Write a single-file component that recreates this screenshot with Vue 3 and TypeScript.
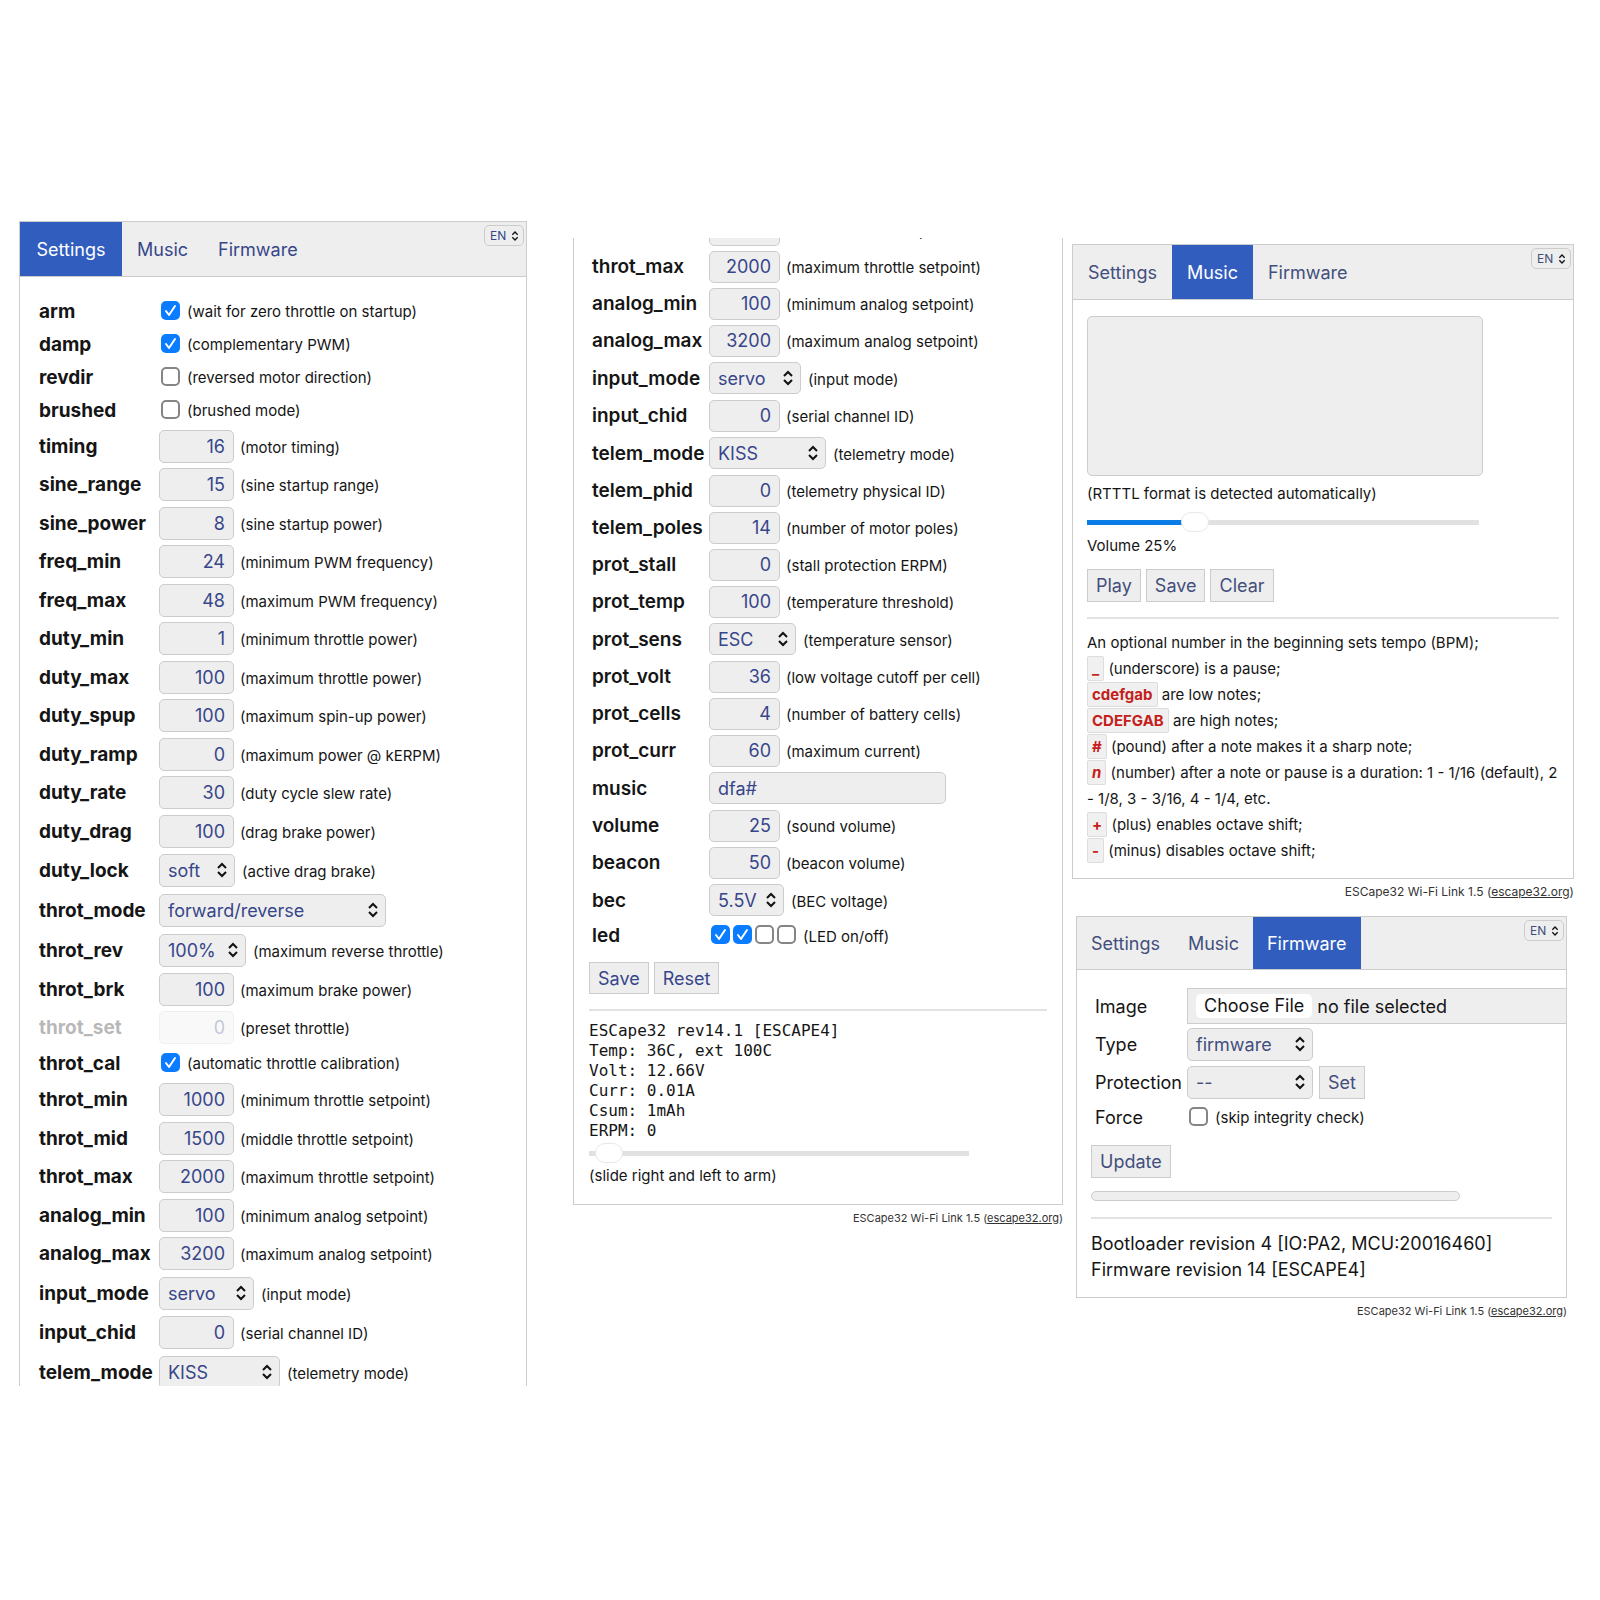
<script setup lang="ts">
import { reactive, ref } from 'vue'

type Kind = 'check' | 'number' | 'select' | 'text' | 'leds'

interface Setting {
  name: string
  kind: Kind
  value?: string | number
  on?: boolean
  leds?: boolean[]
  hint?: string
  size?: string
  disabled?: boolean
}

const check = (name: string, on: boolean, hint: string): Setting => ({ name, kind: 'check', on, hint })
const num = (name: string, value: number, hint: string, disabled = false): Setting => ({ name, kind: 'number', value, hint, disabled })
const pick = (name: string, value: string, size: string, hint = ''): Setting => ({ name, kind: 'select', value, size, hint })

const settings = reactive<Setting[]>([
  check('arm', true, 'wait for zero throttle on startup'),
  check('damp', true, 'complementary PWM'),
  check('revdir', false, 'reversed motor direction'),
  check('brushed', false, 'brushed mode'),
  num('timing', 16, 'motor timing'),
  num('sine_range', 15, 'sine startup range'),
  num('sine_power', 8, 'sine startup power'),
  num('freq_min', 24, 'minimum PWM frequency'),
  num('freq_max', 48, 'maximum PWM frequency'),
  num('duty_min', 1, 'minimum throttle power'),
  num('duty_max', 100, 'maximum throttle power'),
  num('duty_spup', 100, 'maximum spin-up power'),
  num('duty_ramp', 0, 'maximum power @ kERPM'),
  num('duty_rate', 30, 'duty cycle slew rate'),
  num('duty_drag', 100, 'drag brake power'),
  pick('duty_lock', 'soft', 'xs', 'active drag brake'),
  pick('throt_mode', 'forward/reverse', 'xl'),
  pick('throt_rev', '100%', 'sm', 'maximum reverse throttle'),
  num('throt_brk', 100, 'maximum brake power'),
  num('throt_set', 0, 'preset throttle', true),
  check('throt_cal', true, 'automatic throttle calibration'),
  num('throt_min', 1000, 'minimum throttle setpoint'),
  num('throt_mid', 1500, 'middle throttle setpoint'),
  num('throt_max', 2000, 'maximum throttle setpoint'),
  num('analog_min', 100, 'minimum analog setpoint'),
  num('analog_max', 3200, 'maximum analog setpoint'),
  pick('input_mode', 'servo', 'md', 'input mode'),
  num('input_chid', 0, 'serial channel ID'),
  pick('telem_mode', 'KISS', 'lg', 'telemetry mode'),
])

const moreSettings = reactive<Setting[]>([
  num('throt_mid', 1500, 'middle throttle setpoint'),
  num('throt_max', 2000, 'maximum throttle setpoint'),
  num('analog_min', 100, 'minimum analog setpoint'),
  num('analog_max', 3200, 'maximum analog setpoint'),
  pick('input_mode', 'servo', 'md', 'input mode'),
  num('input_chid', 0, 'serial channel ID'),
  pick('telem_mode', 'KISS', 'lg', 'telemetry mode'),
  num('telem_phid', 0, 'telemetry physical ID'),
  num('telem_poles', 14, 'number of motor poles'),
  num('prot_stall', 0, 'stall protection ERPM'),
  num('prot_temp', 100, 'temperature threshold'),
  pick('prot_sens', 'ESC', 'sm', 'temperature sensor'),
  num('prot_volt', 36, 'low voltage cutoff per cell'),
  num('prot_cells', 4, 'number of battery cells'),
  num('prot_curr', 60, 'maximum current'),
  { name: 'music', kind: 'text', value: 'dfa#' },
  num('volume', 25, 'sound volume'),
  num('beacon', 50, 'beacon volume'),
  pick('bec', '5.5V', 'xs', 'BEC voltage'),
  { name: 'led', kind: 'leds', leds: [true, true, false, false], hint: 'LED on/off' },
])

const lists = [
  { id: 'a', rows: settings },
  { id: 'b', rows: moreSettings },
]

const tabs = ['Settings', 'Music', 'Firmware']
const melody = ref('')
const volume = ref(25)
const arming = ref(0)

const telemetry = `ESCape32 rev14.1 [ESCAPE4]
Temp: 36C, ext 100C
Volt: 12.66V
Curr: 0.01A
Csum: 1mAh
ERPM: 0`

const notes = [
  { key: '_', text: '(underscore) is a pause;' },
  { key: 'cdefgab', text: 'are low notes;' },
  { key: 'CDEFGAB', text: 'are high notes;' },
  { key: '#', text: '(pound) after a note makes it a sharp note;' },
  { key: 'n', italic: true, text: '(number) after a note or pause is a duration: 1 - 1/16 (default), 2 - 1/8, 3 - 3/16, 4 - 1/4, etc.' },
  { key: '+', text: '(plus) enables octave shift;' },
  { key: '-', text: '(minus) disables octave shift;' },
]
</script>

<template>
  <main class="page">
    <section v-for="list in lists" :key="list.id" class="column" :class="'column-' + list.id">
      <div class="panel">
        <header v-if="list.id === 'a'" class="bar">
          <nav class="tabs">
            <a v-for="tab in tabs" :key="tab" href="#" class="tab" :class="{ active: tab === 'Settings' }">{{ tab }}</a>
          </nav>
          <span class="select lang">
            <select aria-label="Language"><option>EN</option></select>
            <svg viewBox="0 0 12 16"><path d="M2 6l4-4 4 4M2 10l4 4 4-4" /></svg>
          </span>
        </header>

        <div class="rows">
          <div v-for="row in list.rows" :key="row.name" class="row" :class="['row-' + row.kind, { disabled: row.disabled }]">
            <label class="name" :for="list.id + row.name">{{ row.name }}</label>
            <input v-if="row.kind === 'check'" :id="list.id + row.name" v-model="row.on" type="checkbox">
            <input v-else-if="row.kind === 'number'" :id="list.id + row.name" v-model="row.value" class="field number" type="number" :disabled="row.disabled">
            <input v-else-if="row.kind === 'text'" :id="list.id + row.name" v-model="row.value" class="field text" type="text">
            <span v-else-if="row.kind === 'select'" class="select" :class="row.size">
              <select :id="list.id + row.name"><option>{{ row.value }}</option></select>
              <svg viewBox="0 0 12 16"><path d="M2 6l4-4 4 4M2 10l4 4 4-4" /></svg>
            </span>
            <span v-else class="leds">
              <input v-for="(lit, i) in row.leds" :id="i === 0 ? list.id + row.name : undefined" :key="i" type="checkbox" :checked="lit" :aria-label="'LED ' + (i + 1)">
            </span>
            <span v-if="row.hint" class="hint">({{ row.hint }})</span>
          </div>
        </div>

        <div v-if="list.id === 'b'" class="status">
          <div class="buttons">
            <button type="button">Save</button>
            <button type="button">Reset</button>
          </div>
          <hr>
          <pre>{{ telemetry }}</pre>
          <input id="arming" v-model="arming" class="slider" type="range" min="0" max="100" :style="{ '--fill': arming + '%' }">
          <label class="note" for="arming">(slide right and left to arm)</label>
        </div>
      </div>
      <footer v-if="list.id === 'b'">ESCape32 Wi-Fi Link 1.5 (<a href="#">escape32.org</a>)</footer>
    </section>

    <section class="column column-c">
      <div class="music">
        <div class="panel">
          <header class="bar">
            <nav class="tabs">
              <a v-for="tab in tabs" :key="tab" href="#" class="tab" :class="{ active: tab === 'Music' }">{{ tab }}</a>
            </nav>
            <span class="select lang">
              <select aria-label="Language"><option>EN</option></select>
              <svg viewBox="0 0 12 16"><path d="M2 6l4-4 4 4M2 10l4 4 4-4" /></svg>
            </span>
          </header>
          <div class="body">
            <textarea id="melody" v-model="melody"></textarea>
            <label class="note" for="melody">(RTTTL format is detected automatically)</label>
            <input id="loudness" v-model="volume" class="slider" type="range" min="0" max="100" :style="{ '--fill': volume + '%' }">
            <label class="note" for="loudness">Volume {{ volume }}%</label>
            <div class="buttons">
              <button type="button">Play</button>
              <button type="button">Save</button>
              <button type="button">Clear</button>
            </div>
            <hr>
            <div class="help">
              <div>An optional number in the beginning sets tempo (BPM);</div>
              <div v-for="note in notes" :key="note.key">
                <code :class="{ italic: note.italic }">{{ note.key }}</code> {{ note.text }}
              </div>
            </div>
          </div>
        </div>
        <footer>ESCape32 Wi-Fi Link 1.5 (<a href="#">escape32.org</a>)</footer>
      </div>

      <div class="firmware">
        <div class="panel">
          <header class="bar">
            <nav class="tabs">
              <a v-for="tab in tabs" :key="tab" href="#" class="tab" :class="{ active: tab === 'Firmware' }">{{ tab }}</a>
            </nav>
            <span class="select lang">
              <select aria-label="Language"><option>EN</option></select>
              <svg viewBox="0 0 12 16"><path d="M2 6l4-4 4 4M2 10l4 4 4-4" /></svg>
            </span>
          </header>
          <div class="rows">
            <div class="row">
              <label class="name" for="image">Image</label>
              <label class="file">
                <input id="image" type="file">
                <span class="choose">Choose File</span>
                <span>no file selected</span>
              </label>
            </div>
            <div class="row">
              <label class="name" for="type">Type</label>
              <span class="select wide">
                <select id="type"><option>firmware</option></select>
                <svg viewBox="0 0 12 16"><path d="M2 6l4-4 4 4M2 10l4 4 4-4" /></svg>
              </span>
            </div>
            <div class="row">
              <label class="name" for="protection">Protection</label>
              <span class="select wide">
                <select id="protection"><option>--</option></select>
                <svg viewBox="0 0 12 16"><path d="M2 6l4-4 4 4M2 10l4 4 4-4" /></svg>
              </span>
              <button type="button">Set</button>
            </div>
            <div class="row row-check">
              <label class="name" for="force">Force</label>
              <input id="force" type="checkbox">
              <span class="hint">(skip integrity check)</span>
            </div>
          </div>
          <div class="body">
            <button type="button">Update</button>
            <div class="progress" role="progressbar" aria-label="Update progress" aria-valuenow="0"></div>
            <hr>
            <div class="versions">
              <div>Bootloader revision 4 [IO:PA2, MCU:20016460]</div>
              <div>Firmware revision 14 [ESCAPE4]</div>
            </div>
          </div>
        </div>
        <footer>ESCape32 Wi-Fi Link 1.5 (<a href="#">escape32.org</a>)</footer>
      </div>
    </section>
  </main>
</template>

<style>
body {
  margin: 0;
  background: #fff;
}
</style>

<style scoped>
* {
  box-sizing: border-box;
}

.page {
  --ink: #37468a;
  --line: #ccc;
  --fill-grey: #eee;
  --name-width: 120px;
  --number-width: 75px;
  --field-height: 33px;
  --row: 38px;
  display: grid;
  grid-template-columns: 508fr 536fr 511fr;
  align-items: start;
  padding: 221px 26px 0 19px;
  font-family: Inter, "Liberation Sans", sans-serif;
  font-size: 18px;
  color: #151515;
}

.column {
  min-width: 0;
}

.column-a .panel {
  max-height: 1165px;
  overflow: hidden;
  border-bottom: 0;
}

.column-b {
  --name-width: 117px;
  --number-width: 71px;
  --field-height: 32px;
  --row: 37px;
  padding: 17px 0 0 46px;
}

.column-b .panel {
  overflow: hidden;
  border-top: 0;
}

.column-c {
  --ink: #434f7c;
  padding: 23px 0 0 9px;
}

.panel {
  border: 1px solid var(--line);
}

/* header */
.bar {
  display: flex;
  justify-content: space-between;
  align-items: flex-start;
  height: 55px;
  background: var(--fill-grey);
  border-bottom: 1px solid var(--line);
}

.tabs {
  display: flex;
  height: 100%;
}

.tab {
  display: flex;
  align-items: center;
  justify-content: center;
  padding: 0 15px;
  color: var(--ink);
  text-decoration: none;
}

.column-a .tab:first-child {
  min-width: 102px;
}

.tab.active {
  background: #315dbf;
  color: #fff;
}

/* fields */
.field,
select,
textarea,
button {
  font: inherit;
  color: var(--ink);
  background: var(--fill-grey);
  border: 1px solid var(--line);
  border-radius: 5px;
  margin: 0;
}

.field,
.select select {
  height: var(--field-height);
  padding: 0 8px;
}

.number {
  width: var(--number-width);
  text-align: right;
  appearance: textfield;
}

.number::-webkit-inner-spin-button {
  appearance: none;
  margin: 0;
}

.text {
  width: 237px;
}

.select {
  position: relative;
  display: flex;
}

.select select {
  width: 100%;
  appearance: none;
}

.select svg {
  position: absolute;
  top: 50%;
  right: 7px;
  width: 12px;
  height: 16px;
  margin-top: -8px;
  fill: none;
  stroke: #111;
  stroke-width: 2;
  pointer-events: none;
}

.xs { width: 76px; }
.sm { width: 87px; }
.md { width: 95px; }
.lg { width: 121px; }
.xl { width: 227px; }
.wide { width: 126px; }

.column-b .xs { width: 75px; }
.column-b .md { width: 92px; }
.column-b .lg { width: 117px; }

.lang {
  width: 40px;
  margin: 3px 2px 0 0;
}

.lang select {
  height: 21px;
  padding: 0 5px;
  font-size: 12px;
}

.lang svg {
  right: 5px;
  width: 8px;
  height: 12px;
  margin-top: -6px;
}

input[type='checkbox'] {
  appearance: none;
  flex: none;
  width: 19px;
  height: 19px;
  margin: 0 0 2px 2px;
  border: 2px solid #858585;
  border-radius: 5px;
  background: #fff;
}

input[type='checkbox']:checked {
  border: 0;
  background: #0a7cff url("data:image/svg+xml,%3Csvg xmlns='http://www.w3.org/2000/svg' viewBox='0 0 19 19'%3E%3Cpath d='M5 10l3 4 6-9' fill='none' stroke='white' stroke-width='2' stroke-linecap='round' stroke-linejoin='round'/%3E%3C/svg%3E");
}

.leds {
  display: flex;
  gap: 1px;
}

button {
  height: var(--field-height);
  padding: 0 8px;
  border-radius: 0;
}

/* rows */
.rows {
  padding: 18px 18px 0 19px;
}

.column-b .rows {
  padding-left: 18px;
  margin-top: -45px;
}

.row {
  display: flex;
  align-items: center;
  height: var(--row);
}

.row-check {
  height: 33px;
}

.column-a .row-number:nth-child(even) {
  height: 39px;
}

.column-a .row-select {
  height: 40px;
}

.column-b .row-select,
.column-b .row-text {
  height: 38px;
}

.row-leds {
  height: 33px;
}

.name {
  flex: none;
  width: var(--name-width);
  font-weight: 600;
  font-size: 19px;
}

.column-a .name {
  font-weight: 700;
}

.hint {
  padding: 2px 0 0 7px;
  font-size: 15px;
  white-space: nowrap;
}

.row-check .hint {
  padding-top: 0;
}

.number + .hint {
  padding-left: 6px;
}

.disabled .name,
.disabled .field {
  opacity: 0.3;
}

.note {
  display: block;
  font-size: 15px;
  line-height: 20px;
}

hr {
  height: 2px;
  margin: 15px 0 0;
  border: 0;
  background: #e2e2e2;
}

.buttons {
  display: flex;
  gap: 5px;
}

.slider {
  display: block;
  appearance: none;
  width: 83%;
  height: 20px;
  margin: 0;
  padding: 0 6px;
  background:
    linear-gradient(#0a7ce6, #0a7ce6) left center / var(--fill) 5px no-repeat,
    linear-gradient(#e1e1e1, #e1e1e1) center / 100% 5px no-repeat;
}

.slider::-webkit-slider-thumb {
  appearance: none;
  width: 28px;
  height: 20px;
  border: 1px solid #e8e8e8;
  border-radius: 10px;
  background: #fff;
}

.status {
  padding: 10px 15px 18px;
}

.status .note {
  margin-top: 3px;
}

pre {
  margin: 10px 0 2px;
  font: 16px/20px "DejaVu Sans Mono", monospace;
}

footer {
  padding-top: 5px;
  font-size: 11px;
  line-height: 16px;
  text-align: right;
  color: #333;
}

footer a {
  color: inherit;
}

.body {
  padding: 16px 14px 14px;
}

textarea {
  display: block;
  width: 84%;
  height: 160px;
  resize: none;
}

.music footer {
  font-size: 12px;
}

.music .note {
  margin-top: 8px;
}

.music .slider {
  margin-top: 8px;
}

.music .slider + .note {
  margin-top: 4px;
}

.music .buttons {
  margin-top: 13px;
}

.help {
  margin-top: 11px;
  font-size: 15px;
  line-height: 26px;
}

code {
  padding: 2px 4px;
  font: inherit;
  font-weight: 700;
  color: #c4211c;
  background: #f0f0f0;
  border: 1px solid #ddd;
  border-radius: 2px;
}

.italic {
  font-style: italic;
}

.firmware {
  --name-width: 92px;
  margin: 16px 7px 0 4px;
}

.firmware .bar {
  height: 53px;
}

.firmware .tab {
  padding: 0 14px;
}

.firmware .rows {
  padding: 17px 0 0 18px;
}

.firmware .body {
  padding-top: 11px;
}

.firmware .name {
  font-size: 18px;
  font-weight: 400;
}

.firmware .row button {
  margin-left: 6px;
}

.file {
  position: relative;
  display: flex;
  flex: 1;
  align-items: center;
  gap: 5px;
  height: 36px;
  padding-left: 8px;
  background: var(--fill-grey);
  border: 1px solid var(--line);
  border-right: 0;
}

.file input {
  position: absolute;
  width: 1px;
  height: 1px;
  opacity: 0;
}

.choose {
  padding: 0 8px;
  line-height: 24px;
  background: #fff;
  border-radius: 5px;
}

.progress {
  width: 80%;
  height: 10px;
  margin-top: 13px;
  background: var(--fill-grey);
  border: 1px solid var(--line);
  border-radius: 5px;
}

.firmware hr {
  margin-top: 16px;
}

.versions {
  margin-top: 12px;
  line-height: 26px;
}
</style>
